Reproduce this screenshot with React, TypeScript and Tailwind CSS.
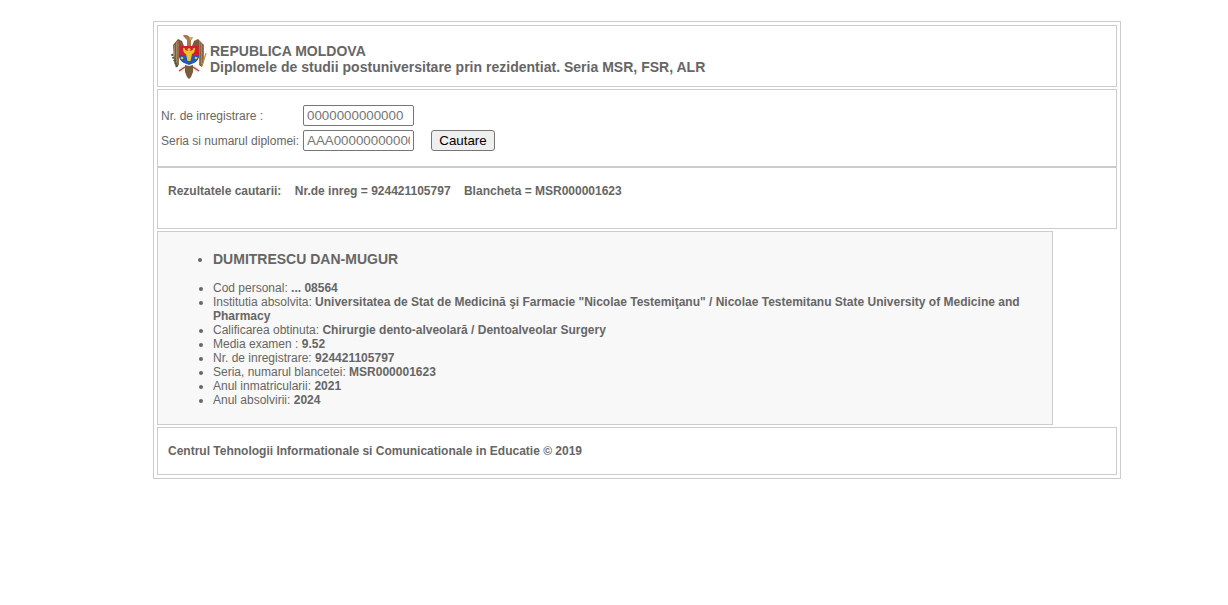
function Emblem() {
  return (
    <svg width="36" height="46" viewBox="0 0 36 46" className="shrink-0 mt-[2px]">
      {/* eagle head and neck */}
      <path d="M12 1 L16 1 L19 3 L20 6 L20 12 L16 12 L16 6 L13 3 Z" fill="#a87a48" />
      <path d="M18 3 L22 3 L21 6 L19 6 Z" fill="#d2a94a" />
      {/* wings */}
      <path d="M7 5 L11 7 L13 12 L8 12 L8 31 L5 33 L3 27 L2 11 Z" fill="#7f583a" />
      <path d="M27 5 L23 7 L21 12 L28 12 L28 31 L31 33 L33 27 L33 11 Z" fill="#7f583a" />
      <path d="M3.5 11 V27 M5.5 8 V30 M7 7 V31 M28.8 7 V31 M30.5 8 V30 M32.2 11 V27" stroke="#c9a684" strokeWidth="0.6" />
      {/* shield: red over blue */}
      <path d="M8 12 H28 V21 H8 Z" fill="#d2202f" />
      <path d="M8 21 H28 V23 Q27 27 23 29 L18 31 L13 29 Q9 27 8 23 Z" fill="#2458b4" />
      {/* aurochs head */}
      <path d="M12 14 Q12 19 15 20 L16.5 27 L19.5 27 L21 20 Q24 19 24 14 L22.5 14 Q22 17 18 17 Q14 17 13.5 14 Z" fill="#e6c62c" />
      <circle cx="18" cy="15.5" r="1.5" fill="#e6c62c" />
      <circle cx="11" cy="24" r="1.3" fill="#e6c62c" />
      <circle cx="25" cy="24" r="1.3" fill="#e6c62c" />
      {/* olive branch and sceptre */}
      <path d="M1 20 L6 33" stroke="#3c5a36" strokeWidth="2.2" strokeDasharray="2 1" />
      <path d="M35 19 L31 32" stroke="#b89a3a" strokeWidth="1.2" />
      {/* legs and tail */}
      <path d="M7 35 L13 31 L15 36 L9 39 Z" fill="#f1ece2" />
      <path d="M29 35 L23 31 L21 36 L27 39 Z" fill="#f1ece2" />
      <path d="M8 37 L14 33 M28 37 L22 33" stroke="#c5303a" strokeWidth="1.2" />
      <path d="M14 31 L18 32 L22 31 L22 38 L20 43 L18 45 L16 43 L14 38 Z" fill="#7c5a3c" />
    </svg>
  );
}

function Field({ label, value }: { label: string; value: string }) {
  return (
    <li className="leading-[14px]">
      {label} <b>{value}</b>
    </li>
  );
}

export default function App() {
  return (
    <div className="min-h-[605px] bg-white pt-[21px] text-[#666] font-['Liberation_Sans',Arial,sans-serif] text-xs">
      <div className="ml-[153px] w-[968px] h-[458px] border border-[#ccc] p-[3px]">
        {/* Header */}
        <div className="h-[62px] border border-[#ccc] flex items-center pl-[13px] gap-[3px]">
          <Emblem />
          <div className="text-sm font-bold leading-4 pt-[5px] tracking-[0.014px]">
            <div>REPUBLICA MOLDOVA</div>
            <div>Diplomele de studii postuniversitare prin rezidentiat. Seria MSR, FSR, ALR</div>
          </div>
        </div>

        {/* Search form */}
        <div className="mt-[2px] h-[78px] border border-[#ccc] pl-[3px] pt-[15px]">
          <div className="flex items-center h-[21px]">
            <span className="w-[142px]">Nr. de inregistrare :</span>
            <input
              readOnly
              placeholder="0000000000000"
              className="w-[111px] h-[21px] border border-[#767676] rounded-[2px] px-[3px] text-[13.33px] text-[#757575] placeholder:text-[#757575] outline-none"
            />
          </div>
          <div className="flex items-center h-[21px] mt-[4px]">
            <span className="w-[142px]">Seria si numarul diplomei:</span>
            <input
              readOnly
              placeholder="AAA000000000000"
              className="w-[111px] h-[21px] border border-[#767676] rounded-[2px] px-[3px] text-[13.33px] text-[#757575] placeholder:text-[#757575] outline-none"
            />
            <button className="ml-[17px] w-[64px] h-[21px] border border-[#767676] rounded-[3px] bg-[#efefef] text-[13.33px] text-black leading-none">
              Cautare
            </button>
          </div>
        </div>

        {/* Results summary */}
        <div className="h-[62px] border border-[#ccc] pl-[10px] pt-[16px] font-bold leading-[14px]">
          <span>Rezultatele cautarii:</span>
          <span className="ml-[13.4px]">Nr.de inreg = 924421105797</span>
          <span className="ml-[13.4px]">Blancheta = MSR000001623</span>
        </div>

        {/* Person */}
        <div className="mt-[2px] w-[896px] h-[194px] border border-[#ccc] bg-[#f8f8f8] pt-[19px] pl-[55px] pr-[30px]">
          <ul className="list-disc">
            <li className="text-sm font-bold leading-4">DUMITRESCU DAN-MUGUR</li>
          </ul>
          <ul className="list-disc mt-[14px]">
            <Field label="Cod personal:" value="... 08564" />
            <Field
              label="Institutia absolvita:"
              value={'Universitatea de Stat de Medicină şi Farmacie "Nicolae Testemiţanu" / Nicolae Testemitanu State University of Medicine and Pharmacy'}
            />
            <Field label="Calificarea obtinuta:" value="Chirurgie dento-alveolară / Dentoalveolar Surgery" />
            <Field label="Media examen :" value="9.52" />
            <Field label="Nr. de inregistrare:" value="924421105797" />
            <Field label="Seria, numarul blancetei:" value="MSR000001623" />
            <Field label="Anul inmatricularii:" value="2021" />
            <Field label="Anul absolvirii:" value="2024" />
          </ul>
        </div>

        {/* Footer */}
        <div className="mt-[2px] h-[48px] border border-[#ccc] pl-[10px] pt-[16px] font-bold leading-[14px]">
          Centrul Tehnologii Informationale si Comunicationale in Educatie © 2019
        </div>
      </div>
    </div>
  );
}
